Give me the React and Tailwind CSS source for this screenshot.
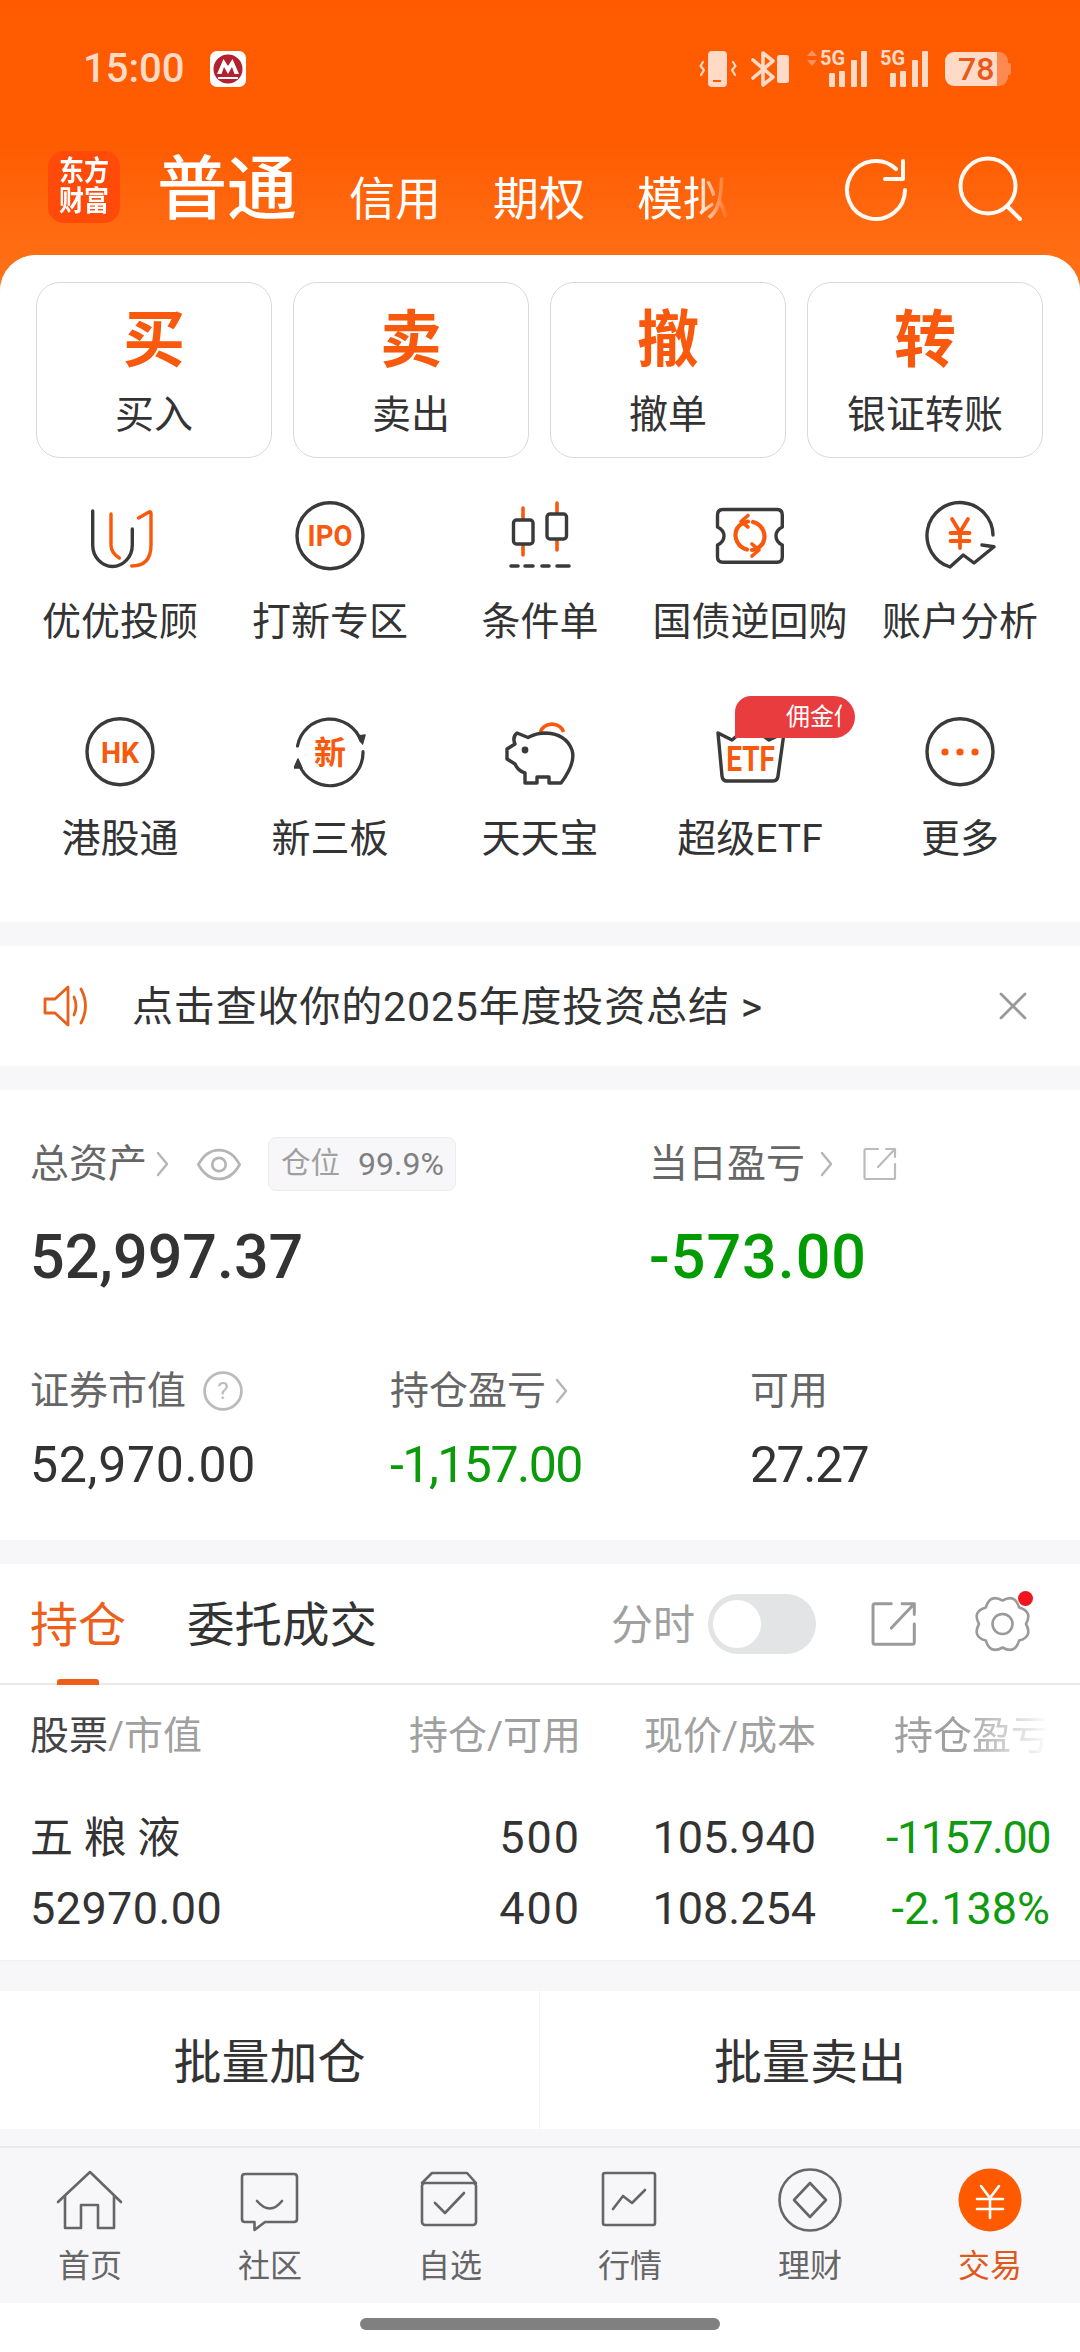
import React from "react";

const DK = "#3a3a3a";
const OR = "#f8590d";

const Ico = ({ box, children, className = "" }) => {
  const [x, y] = box;
  return (
    <svg width="72" height="72" viewBox={`${x} ${y} 72 72`} fill="none" strokeLinecap="round" strokeLinejoin="round" className={className}>
      {children}
    </svg>
  );
};

const IconUU = () => (
  <Ico box={[84, 499]}>
    <path d="M92.7 511V545a19.8 21.5 0 0 0 39.6 0V529" stroke={DK} strokeWidth="3.4" />
    <path d="M111 514V545q0 8 8.3 13" stroke={OR} strokeWidth="3.4" />
    <path d="M138.5 518L149 512q2 -1 2 2V545Q151 566 131.7 566" stroke={OR} strokeWidth="3.4" />
  </Ico>
);
const Letters = ({ x, y, size, children, sx = 1 }) => (
  <text x={0} y={0} transform={`translate(${x} ${y}) scale(${sx} 1)`} textAnchor="middle" fontSize={size} fontWeight="700" fill={OR} fontFamily="Roboto, sans-serif" stroke="none">{children}</text>
);
const IconIPO = () => (
  <Ico box={[294, 499]}>
    <circle cx="330" cy="535.7" r="33" stroke={DK} strokeWidth="3.4" />
    <Letters x={330} y={546} size={29} sx={0.95}>IPO</Letters>
  </Ico>
);
const IconCandle = () => (
  <Ico box={[504, 499]}>
    <path d="M523 508V555M557 503V550" stroke={OR} strokeWidth="3.6" />
    <rect x="513.5" y="520" width="19.5" height="24" rx="3" fill="#fff" stroke={DK} strokeWidth="3.4" />
    <rect x="547" y="514" width="19.5" height="25" rx="3" fill="#fff" stroke={DK} strokeWidth="3.4" />
    <path d="M511 566H518M525 566H533M542 566H549M557 566H569" stroke={DK} strokeWidth="3.6" />
  </Ico>
);
const IconTicket = () => (
  <Ico box={[714, 499]}>
    <path d="M723 509.5H777Q782.3 509.5 782.3 515V527Q776 530 776 536T782.3 545V557Q782.3 562.3 777 562.3H723Q717.5 562.3 717.5 557V545Q724 542 724 536T717.5 527V515Q717.5 509.5 723 509.5Z" stroke={DK} strokeWidth="3.4" />
    <path d="M747 549.5A15 15 0 0 1 737 528.5Q741 522.5 748 521.5M753 522A15 15 0 0 1 763 543Q759 549 752 550" stroke={OR} strokeWidth="4.2" />
    <path d="M748 515.5L741 521.5L748 527M752 544L759 550L752 556" stroke={OR} strokeWidth="3.6" />
  </Ico>
);
const IconYen = () => (
  <Ico box={[924, 499]}>
    <path d="M993 535A33 33 0 1 0 950 567L963.3 555L974 563L994 546.7L982 545" stroke={DK} strokeWidth="3.4" />
    <path d="M952 519L960 532L968 519M950.5 533H969.5M950.5 541H969.5M960 532V548" stroke={OR} strokeWidth="3.8" />
  </Ico>
);
const IconHK = () => (
  <Ico box={[84, 717]}>
    <circle cx="120" cy="752.7" r="33" stroke={DK} strokeWidth="3.4" />
    <Letters x={120} y={763.5} size={30} sx={0.95}>HK</Letters>
  </Ico>
);
const IconNew = () => (
  <Ico box={[294, 717]}>
    <path d="M297.5 747A33 33 0 0 1 361 742M363 752.7A33 33 0 0 1 299 765" stroke={DK} strokeWidth="3.2" />
    <path d="M358 737L362.5 745L365 736Z" fill={DK} stroke={DK} strokeWidth="1.5" />
    <path d="M294 769L298 760L302 769Z" fill={DK} stroke={DK} strokeWidth="1.5" />
    <text x="330" y="765" textAnchor="middle" fontSize="32" fontWeight="700" fill={OR} fontFamily="'Noto Sans CJK SC', sans-serif">新</text>
  </Ico>
);
const IconPig = () => (
  <Ico box={[504, 715]}>
    <path d="M540.5 731A12 11 0 0 1 563.5 731" stroke={OR} strokeWidth="3.8" strokeLinecap="butt" />
    <path d="M517 732L528 736.5Q536 732 546 732Q566 733 572 749Q576 762 561 782H549V776H537V782H525V772Q518 770 515 763L507 758V748L515 743Q512 736 517 732Z" stroke={DK} strokeWidth="3.4" fill="#fff" />
    <circle cx="525" cy="749" r="3.4" fill={DK} />
  </Ico>
);
const IconEtf = () => (
  <Ico box={[714, 717]}>
    <path d="M738 736L732 741L718 734L722 777Q722.5 782 727 782H773Q777.5 782 778 777L784 734L769 741L762 736" stroke={DK} strokeWidth="3.4" />
    <Letters x={750.5} y={772} size={35} sx={0.8}>ETF</Letters>
  </Ico>
);
const IconMore = () => (
  <Ico box={[924, 717]}>
    <circle cx="960" cy="752.7" r="33" stroke={DK} strokeWidth="3.4" />
    <circle cx="945" cy="753" r="3.6" fill={OR} />
    <circle cx="960" cy="753" r="3.6" fill={OR} />
    <circle cx="975" cy="753" r="3.6" fill={OR} />
  </Ico>
);

const gearPath = (() => {
  const cx = 27.5, cy = 27, n = 8;
  let d = "";
  for (let i = 0; i < n; i++) {
    const a0 = (i / n) * Math.PI * 2 - Math.PI / 2;
    const a1 = ((i + 0.5) / n) * Math.PI * 2 - Math.PI / 2;
    const a2 = ((i + 1) / n) * Math.PI * 2 - Math.PI / 2;
    const r = 23.5, rb = 33;
    const p0 = [cx + r * Math.cos(a0), cy + r * Math.sin(a0)];
    const c = [cx + rb * Math.cos(a1), cy + rb * Math.sin(a1)];
    const p2 = [cx + r * Math.cos(a2), cy + r * Math.sin(a2)];
    if (i === 0) d += `M${p0[0].toFixed(1)} ${p0[1].toFixed(1)}`;
    d += `Q${c[0].toFixed(1)} ${c[1].toFixed(1)} ${p2[0].toFixed(1)} ${p2[1].toFixed(1)}`;
  }
  return d + "Z";
})();

const Chevron = ({ className = "" }) => (
  <svg width="15" height="26" viewBox="0 0 15 26" fill="none" className={className}>
    <path d="M3 2L12 13L3 24" stroke="#b5b5b5" strokeWidth="2.4" strokeLinecap="round" strokeLinejoin="round" />
  </svg>
);

const ShareIcon = ({ size, color }) => (
  <svg width={size} height={size} viewBox="0 0 34 34" fill="none">
    <path d="M15 2H3Q1.5 2 1.5 3.5V30.5Q1.5 32 3 32H30.5Q32 32 32 30.5V17" stroke={color} strokeWidth="2.2" strokeLinecap="round" />
    <path d="M15 20L32 2M23 2H32V10" stroke={color} strokeWidth="2.2" strokeLinecap="round" strokeLinejoin="round" />
  </svg>
);

const Bars = () => (
  <svg width="38" height="36" viewBox="0 0 38 36" fill="#ffdac6">
    <rect x="0" y="22" width="6" height="14" rx="1" />
    <rect x="10" y="20" width="6" height="16" rx="1" />
    <rect x="22" y="9" width="6" height="27" rx="1" />
    <rect x="32" y="0" width="6" height="36" rx="1" />
  </svg>
);

const StatusBar = () => (
  <div className="h-[138px] flex items-center pl-[83px] pr-[69px] text-[#ffdac6]">
    <span className="text-[40px] leading-none font-medium w-[127px]">15:00</span>
    <svg width="36" height="36" viewBox="0 0 36 36">
      <rect width="36" height="36" rx="7" fill="#fff" />
      <circle cx="18" cy="18" r="14.5" fill="#b3202f" />
      <path d="M7 23L13.5 8L18 15L22.5 8L29 23H24.5L22 16L18 23L14 16L11.5 23Z" fill="#fff" />
      <path d="M8 26H28V28H8Z" fill="#fff" />
    </svg>
    <div className="ml-auto flex items-center h-[38px]">
      <svg width="40" height="38" viewBox="0 0 40 38" fill="none">
        <rect x="9" y="1" width="19" height="36" rx="4" fill="#ffdac6" />
        <rect x="14" y="30" width="8" height="2" fill="#ff5a00" />
        <path d="M4 12L1.5 16L5 20L2 25M34 12L36.5 16L33 20L36 25" stroke="#ffdac6" strokeWidth="2.2" strokeLinecap="round" strokeLinejoin="round" />
      </svg>
      <svg width="40" height="38" viewBox="0 0 40 38" fill="none" className="ml-[12px]">
        <path d="M2 10L22 27L12 35V3L22 11L2 28" stroke="#ffdac6" strokeWidth="3.6" strokeLinejoin="round" strokeLinecap="round" />
        <rect x="26" y="5" width="12" height="28" rx="2.5" fill="#ffdac6" />
      </svg>
      <div className="relative w-[62px] h-[38px] ml-[16px]">
        <svg width="10" height="16" viewBox="0 0 10 16" fill="#ff9060" className="absolute left-0 top-0">
          <path d="M5 0L10 6H0ZM5 16L0 10H10Z" />
        </svg>
        <span className="absolute left-[13px] top-[-2px] text-[20px] leading-[20px] font-bold">5G</span>
        <div className="absolute left-[22px] top-[1px]"><Bars /></div>
      </div>
      <div className="relative w-[50px] h-[38px] ml-[11px]">
        <span className="absolute left-0 top-[-2px] text-[20px] leading-[20px] font-bold">5G</span>
        <div className="absolute left-[10px] top-[1px]"><Bars /></div>
      </div>
      <div className="ml-[15px] flex items-center">
        <div className="relative w-[63px] h-[34px] flex">
          <div className="w-[52px] h-full bg-[#ffdac6] rounded-l-[9px]" />
          <div className="w-[11px] h-full bg-[#ff8a50] rounded-r-[9px]" />
          <span className="absolute left-[13px] top-0 text-[32px] leading-[34px] font-medium text-[#e8581a]">78</span>
        </div>
        <div className="w-[3px] h-[12px] bg-[#ff8a50] rounded-r-[2px]" />
      </div>
    </div>
  </div>
);

const NavBar = () => (
  <div className="h-[100px] flex items-end pl-[48px] pb-[18px] text-white">
    <div className="w-[72px] h-[72px] rounded-[16px] bg-[#ff4a0a] flex flex-col items-center justify-center text-[25px] leading-[30px] font-bold mb-[-3px]">
      <span className="scale-y-[1.15]">东方</span>
      <span className="scale-y-[1.15]">财富</span>
    </div>
    <span className="ml-[37px] text-[70px] leading-[80px] font-medium mb-[-10px]">普通</span>
    <span className="ml-[52px] text-[46px] leading-[56px] mb-[-7px]">信用</span>
    <span className="ml-[52px] text-[46px] leading-[56px] mb-[-7px]">期权</span>
    <span className="ml-[52px] text-[46px] leading-[56px] mb-[-7px] [mask-image:linear-gradient(to_right,black_65%,transparent_100%)]">模拟</span>
    <svg width="64" height="64" viewBox="0 0 64 64" fill="none" className="ml-[115px] mb-[-2px]" stroke="#fffaf5" strokeWidth="4" strokeLinecap="round" strokeLinejoin="round">
      <path d="M61 32A29 29 0 1 1 52 11" />
      <path d="M59 3V21H41" />
    </svg>
    <svg width="66" height="66" viewBox="0 0 66 66" fill="none" className="ml-[50px] mb-[-2px]" stroke="#fffaf5" strokeWidth="4" strokeLinecap="round">
      <circle cx="30" cy="30" r="27.5" />
      <path d="M50 51L62 63" />
    </svg>
  </div>
);

const bigBtns = [
  ["买", "买入"],
  ["卖", "卖出"],
  ["撤", "撤单"],
  ["转", "银证转账"],
];

const row1 = [
  [IconUU, "优优投顾"],
  [IconIPO, "打新专区"],
  [IconCandle, "条件单"],
  [IconTicket, "国债逆回购"],
  [IconYen, "账户分析"],
];
const row2 = [
  [IconHK, "港股通"],
  [IconNew, "新三板"],
  [IconPig, "天天宝"],
  [IconEtf, "超级ETF"],
  [IconMore, "更多"],
];

const Cell = ({ Icon, label, badge }) => (
  <div className="relative flex flex-col items-center">
    <Icon />
    <span className="mt-[26px] text-[39px] leading-[50px] text-[#333] whitespace-nowrap">{label}</span>
    {badge && (
      <div className="absolute left-[90px] top-[-20px] w-[120px] h-[42px] bg-[#e83c3f] rounded-tl-[16px] rounded-r-[21px] overflow-hidden pl-[51px] text-white text-[24px] leading-[42px] whitespace-nowrap">
        <div className="w-[56px] overflow-hidden">佣金低</div>
      </div>
    )}
  </div>
);

const Assets = () => (
  <section className="bg-white h-[450px] pt-[49px]">
    <div className="flex">
      <div className="w-[649px] pl-[30px] flex items-center h-[50px]">
        <span className="text-[39px] leading-[50px] text-[#666]">总资产</span>
        <Chevron className="ml-[8px]" />
        <svg width="46" height="33" viewBox="0 0 44 32" fill="none" className="ml-[26px]">
          <path d="M2 16C8 5 15 2 22 2S36 5 42 16C36 27 29 30 22 30S8 27 2 16Z" stroke="#b5b5b5" strokeWidth="2.6" />
          <circle cx="22" cy="16" r="6.5" stroke="#b5b5b5" strokeWidth="2.6" />
        </svg>
        <div className="ml-[26px] w-[188px] h-[54px] bg-[#f7f7f9] border border-[#ececec] rounded-[8px] flex items-center pl-[12px] leading-none whitespace-nowrap">
          <span className="text-[29.5px] text-[#a0a0a0]">仓位</span>
          <span className="ml-[18px] text-[32px] text-[#808080]">99.9%</span>
        </div>
      </div>
      <div className="flex items-center h-[50px]">
        <span className="text-[39px] leading-[50px] text-[#666]">当日盈亏</span>
        <Chevron className="ml-[14px]" />
        <div className="ml-[29px]"><ShareIcon size={34} color="#bbb" /></div>
      </div>
    </div>
    <div className="flex mt-[32px]">
      <span className="w-[649px] pl-[30px] text-[61px] leading-[72px] font-medium text-[#333]">52,997.37</span>
      <span className="text-[61px] leading-[72px] font-medium tracking-[1px] text-[#029b02]">-573.00</span>
    </div>
    <div className="grid grid-cols-[390px_360px_1fr] mt-[73px] h-[50px]">
      <div className="pl-[30px] flex items-center">
        <span className="text-[39px] leading-[50px] text-[#666]">证券市值</span>
        <svg width="40" height="40" viewBox="0 0 38 38" fill="none" className="ml-[17px]">
          <circle cx="19" cy="19" r="17.5" stroke="#bbb" strokeWidth="2.6" />
          <text x="19" y="27" textAnchor="middle" fontSize="23" fill="#bbb" fontFamily="Roboto, sans-serif">?</text>
        </svg>
      </div>
      <div className="flex items-center">
        <span className="text-[39px] leading-[50px] text-[#666]">持仓盈亏</span>
        <Chevron className="ml-[8px]" />
      </div>
      <span className="text-[39px] leading-[50px] text-[#666]">可用</span>
    </div>
    <div className="grid grid-cols-[390px_360px_1fr] mt-[19px] text-[50px] leading-[60px]">
      <span className="pl-[30px] text-[#333] tracking-[0.7px]">52,970.00</span>
      <span className="text-[#0a9a0a] tracking-[-1.5px]">-1,157.00</span>
      <span className="text-[#333] tracking-[-1.5px]">27.27</span>
    </div>
  </section>
);

const Holdings = () => (
  <section className="bg-white h-[397px] border-b border-[#f1f1f1]">
    <div className="relative h-[121px] border-b-2 border-[#e9e9e9] flex items-center pl-[30px] pr-[50px]">
      <span className="mt-[5px] text-[48px] leading-[60px] text-[#ee5f1a]">持仓</span>
      <span className="ml-[61px] mt-[5px] text-[47.5px] leading-[60px] text-[#333]">委托成交</span>
      <span className="ml-auto mt-[5px] text-[42px] leading-[50px] text-[#a0a0a0]">分时</span>
      <div className="ml-[13px] w-[108px] h-[60px] rounded-full bg-[#e3e4e6] flex items-center pl-[5px]">
        <div className="w-[48px] h-[48px] rounded-full bg-white" />
      </div>
      <div className="ml-[55px]"><ShareIcon size={46} color="#9a9a9a" /></div>
      <div className="relative ml-[58px] w-[55px] h-[54px]">
        <svg width="55" height="54" viewBox="0 0 55 54" fill="none" className="overflow-visible">
          <path d={gearPath} stroke="#9a9a9a" strokeWidth="2.6" strokeLinejoin="round" />
          <circle cx="27.5" cy="27" r="10" stroke="#9a9a9a" strokeWidth="2.6" />
        </svg>
        <span className="absolute right-[-3px] top-[-6px] w-[15px] h-[15px] rounded-full bg-[#f0141e]" />
      </div>
      <span className="absolute left-[57px] bottom-[-2px] w-[42px] h-[6px] rounded-t-[3px] bg-[#ee5f1a]" />
    </div>
    <div className="grid grid-cols-[251px_300px_235px_234px] pl-[30px] mt-[26px] text-[39px] leading-[50px] text-[#a0a0a0]">
      <span className="whitespace-nowrap"><span className="text-[#444]">股票</span>/市值</span>
      <span className="text-right">持仓/可用</span>
      <span className="text-right">现价/成本</span>
      <span className="text-right [mask-image:linear-gradient(to_right,black_62%,transparent_100%)] whitespace-nowrap">持仓盈亏</span>
    </div>
    <div className="grid grid-cols-[251px_300px_235px_234px] pl-[30px] mt-[47px] text-[45px] leading-[60px] text-[#333]">
      <span className="whitespace-nowrap text-[43px]">五 粮 液</span>
      <span className="text-right tracking-[2px]">500</span>
      <span className="text-right">105.940</span>
      <span className="text-right text-[#0f9a0f] tracking-[-1.5px]">-1157.00</span>
    </div>
    <div className="grid grid-cols-[251px_300px_235px_234px] pl-[30px] mt-[11px] text-[45px] leading-[60px] text-[#333]">
      <span className="tracking-[0.4px]">52970.00</span>
      <span className="text-right tracking-[2px]">400</span>
      <span className="text-right">108.254</span>
      <span className="text-right text-[#0f9a0f]">-2.138%</span>
    </div>
  </section>
);

const TabIcon = ({ children, x }) => (
  <svg width="72" height="66" viewBox={`${x} 2169 72 66`} fill="none" stroke="#666" strokeWidth="2.6" strokeLinecap="round" strokeLinejoin="round">
    {children}
  </svg>
);

const tabs = [
  ["首页", <TabIcon x={54}><path d="M58 2203L90 2173L121 2203" /><path d="M65 2197V2229H81V2206H98V2229H114V2197" /></TabIcon>],
  ["社区", <TabIcon x={234}><path d="M245 2175H294Q297 2175 297 2178V2220Q297 2223 294 2223H265L254.5 2231V2223H245Q242 2223 242 2220V2178Q242 2175 245 2175Z" /><path d="M257 2202Q270 2217 282 2202" /></TabIcon>],
  ["自选", <TabIcon x={414}><rect x="422" y="2184" width="54" height="42" rx="3" /><path d="M422 2184L432 2174H467L476 2184" /><path d="M435 2204L445 2214L464 2194" /></TabIcon>],
  ["行情", <TabIcon x={594}><rect x="603" y="2174" width="52" height="52" rx="2" /><path d="M613 2210L623 2197L632 2204L645 2191" /></TabIcon>],
  ["理财", <TabIcon x={774}><circle cx="810" cy="2201" r="30.5" /><path d="M810 2184L826 2201L810 2218L794 2201Z" /></TabIcon>],
  ["交易", <TabIcon x={954}><circle cx="990" cy="2201" r="31.5" fill="#ff5a00" stroke="none" /><path d="M981 2187L990 2199L999 2187M977 2200H1003M977 2210H1003M990 2199V2219" stroke="#fff" /></TabIcon>],
];

export default function App() {
  return (
    <div className="w-[1080px] h-[2352px] overflow-hidden bg-white font-['Roboto','Noto_Sans_CJK_SC',sans-serif]">
      <header className="h-[291px] bg-gradient-to-b from-[#ff5a00] via-[#ff5c02] to-[#ff7318]">
        <StatusBar />
        <NavBar />
      </header>
      <div className="relative -mt-[36px] bg-[#f7f7f9] rounded-t-[36px] overflow-hidden">
        <section className="bg-white h-[667px] pt-[27px]">
          <div className="grid grid-cols-[repeat(4,236px)] gap-x-[21px] pl-[36px]">
            {bigBtns.map(([big, small]) => (
              <div key={big} className="h-[176px] rounded-[24px] border border-[#d9d9d9] flex flex-col items-center">
                <span className="mt-[16px] text-[62px] leading-[84px] font-bold text-[#f8590d]">{big}</span>
                <span className="mt-[7px] text-[39px] leading-[50px] text-[#333]">{small}</span>
              </div>
            ))}
          </div>
          <div className="grid grid-cols-5 px-[15px] pt-[41px]">
            {row1.map(([I, l]) => <Cell key={l} Icon={I} label={l} />)}
          </div>
          <div className="grid grid-cols-5 px-[15px] pt-[69px]">
            {row2.map(([I, l]) => <Cell key={l} Icon={I} label={l} badge={l === "超级ETF"} />)}
          </div>
        </section>
        <section className="mt-[24px] bg-white h-[120px] flex items-center pl-[43px] pr-[53px]">
          <svg width="46" height="42" viewBox="0 0 46 42" fill="none" stroke="#e8601c" strokeWidth="2.8" strokeLinejoin="round" strokeLinecap="round">
            <path d="M2 14H12L25 2V40L12 28H2Z" />
            <path d="M31 12Q35 21 31 30" />
            <path d="M38 4Q47 21 38 38" />
          </svg>
          <span className="ml-[43px] mt-[2px] text-[41px] leading-[50px] text-[#333] whitespace-nowrap tracking-[0.85px]">点击查收你的2025年度投资总结 &gt;</span>
          <svg width="28" height="28" viewBox="0 0 28 28" className="ml-auto" fill="none" stroke="#999" strokeWidth="2.8" strokeLinecap="round">
            <path d="M2 2L26 26M26 2L2 26" />
          </svg>
        </section>
        <div className="mt-[24px]"><Assets /></div>
        <div className="mt-[24px]"><Holdings /></div>
        <section className="mt-[30px] bg-white h-[138px] grid grid-cols-2 text-[48px] text-[#333]">
          <div className="flex items-center justify-center border-r border-[#f3f3f3] pt-[5px]">批量加仓</div>
          <div className="flex items-center justify-center pt-[5px]">批量卖出</div>
        </section>
        <nav className="mt-[17px] h-[157px] border-t-2 border-[#e9e9eb] grid grid-cols-6 pt-[20px]">
          {tabs.map(([l, icon]) => (
            <div key={l} className="flex flex-col items-center">
              {icon}
              <span className={`mt-[12px] text-[32px] leading-[40px] ${l === "交易" ? "text-[#e0591c]" : "text-[#666]"}`}>{l}</span>
            </div>
          ))}
        </nav>
        <div className="bg-white h-[48px] pt-[15px]">
          <div className="mx-auto w-[360px] h-[12px] rounded-full bg-[#808080]" />
        </div>
      </div>
    </div>
  );
}
